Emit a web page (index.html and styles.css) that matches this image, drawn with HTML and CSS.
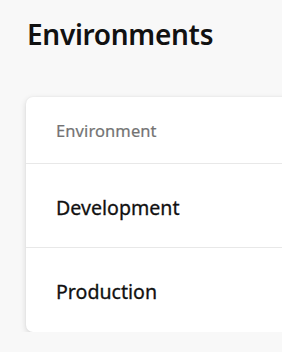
FILE: index.html
```html
<!DOCTYPE html>
<html>
<head>
<meta charset="utf-8">
<link rel="stylesheet" href="styles.css">
</head>
<body>
<div class="page">
  <h1 class="title">Environments</h1>
  <div class="card">
    <div class="row head">Environment</div>
    <div class="row item">Development</div>
    <div class="row item last">Production</div>
  </div>
</div>
</body>
</html>
```

FILE: styles.css
```css
html, body {
  margin: 0;
  padding: 0;
  background: #f8f8f8;
  font-family: "Noto Sans", "Open Sans", sans-serif;
  color: #1b1a19;
  overflow: hidden;
}
.page {
  padding: 14px 0 0 26px;
  width: 400px;
}
.title {
  margin: 0 0 0 1px;
  font-size: 28px;
  font-weight: 600;
  line-height: 40px;
  height: 40px;
  letter-spacing: -0.3px;
  color: #111;
}
.card {
  margin-top: 43px;
  background: #fff;
  border-radius: 7px;
  box-shadow: 0 2px 6px rgba(0,0,0,0.14), 0 0 2px rgba(0,0,0,0.06);
  display: flex;
  flex-direction: column;
}
.row {
  display: flex;
  align-items: center;
  padding-left: 30px;
  border-bottom: 1px solid #e8e8e8;
}
.head {
  height: 66px;
  font-size: 16.5px;
  color: #737373;
  font-weight: 400;
  letter-spacing: 0.1px;
  -webkit-text-stroke: 0.2px #737373;
}
.item {
  height: 84px;
  padding-top: 3px;
  box-sizing: border-box;
  font-size: 19.6px;
  font-weight: 400;
  color: #111;
  -webkit-text-stroke: 0.3px #111;
}
.last {
  border-bottom: none;
  height: 84px;
}
```
